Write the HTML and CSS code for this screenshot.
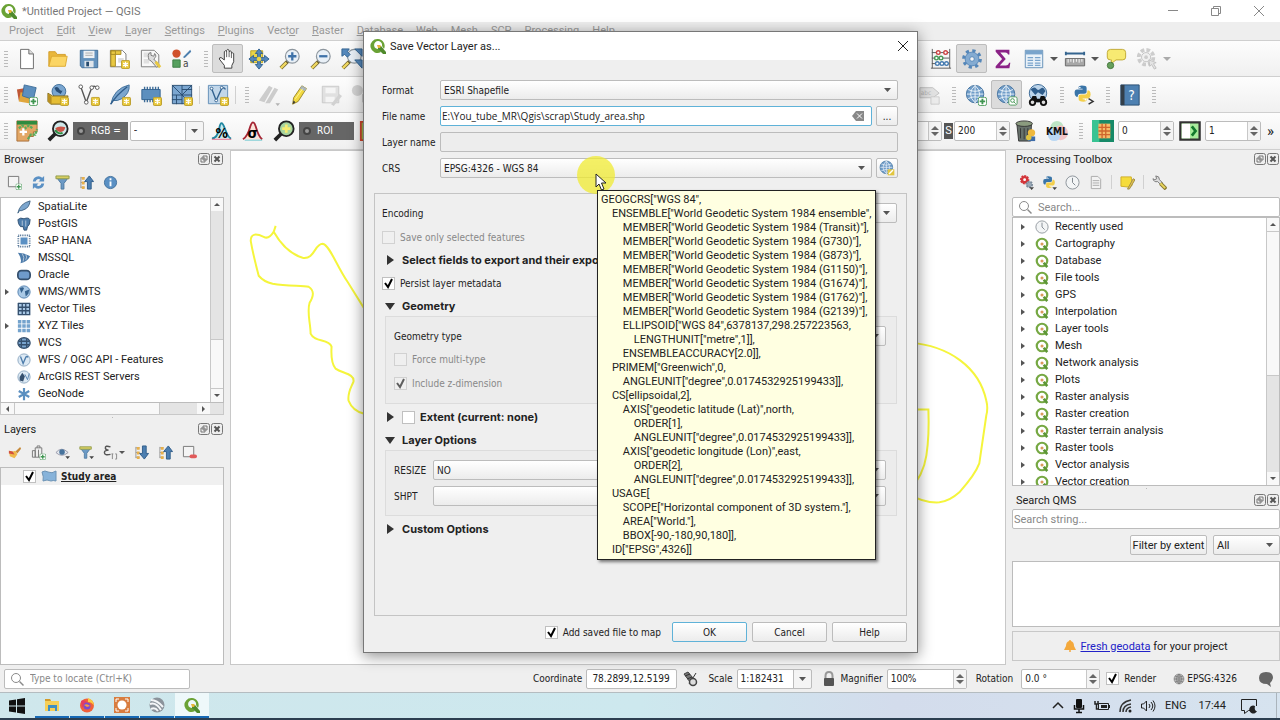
FILE: index.html
```html
<!DOCTYPE html>
<html lang="en">
<head>
    <meta charset="UTF-8">
    <meta name="viewport" content="width=device-width, initial-scale=1.0">
    <title>*Untitled Project — QGIS</title>
    <link rel="stylesheet" href="styles.css">
</head>
<body>
    <!-- shared icons -->
    <svg class="defs" width="0" height="0">
        <symbol id="qgis" viewBox="0 0 16 16">
            <path d="M8 1a7 7 0 1 0 3 13l-2-3a4 4 0 1 1 3-3l2 3A7 7 0 0 0 8 1z" fill="#6aa235"/>
            <path d="M8 8h3l5 6v2h-3L8 11z" fill="#4f8a2c"/>
            <path d="M7 7h3l1 1-1 2H8z" fill="#e8b53a"/>
        </symbol>
        <symbol id="qgis-small" viewBox="0 0 16 16">
            <circle cx="8" cy="8" r="6" fill="#fff" stroke="#76a843" stroke-width="2.5"/>
            <path d="M10 10l4 5" stroke="#5c9636" stroke-width="3"/>
            <circle cx="8" cy="8" r="1.8" fill="#d99a5b"/>
        </symbol>
        <symbol id="star" viewBox="0 0 10 10">
            <rect x=".5" y=".5" width="9" height="9" rx="1.5" fill="#e9c93c" stroke="#b99a28"/>
            <path d="M5 2v6M2.4 3.5l5.2 3M2.4 6.5l5.2-3" stroke="#fff" stroke-width="1.3"/>
        </symbol>
        <symbol id="plus" viewBox="0 0 10 10">
            <rect x=".5" y=".5" width="9" height="9" rx="2" fill="#fff" stroke="#4d9a5b"/>
            <path d="M5 2v6M2 5h6" stroke="#3f9550" stroke-width="2"/>
        </symbol>
        <symbol id="lens" viewBox="0 0 24 24">
            <path d="M10 14l-8 8" stroke="#6f6230" stroke-width="4"/>
            <path d="M8 16l-6 6" stroke="#f0d860" stroke-width="2.500"/>
            <circle cx="14.500" cy="9" r="7.500" fill="#e9f0f7" stroke="#8d969e" stroke-width="1.300"/>
        </symbol>
        <symbol id="globe" viewBox="0 0 24 24">
            <circle cx="11" cy="11" r="9.500" fill="#6f9cc8" stroke="#3e6f9c"/>
            <path d="M11 1.500v19M2 11h18M3.500 6q7.500 4 15 0M3.500 16q7.500-4 15 0M11 1.500q-10 9.500 0 19M11 1.500q10 9.500 0 19" fill="none" stroke="#eef5fb"/>
        </symbol>
        <symbol id="python" viewBox="0 0 24 24">
            <path d="M11 2q6 0 6 3v5q0 2-3 2H9q-3 0-3 4H4q-2-1-2-5t3-4h7V6H7V4q0-2 4-2z" fill="#3a75a8"/>
            <path d="M13 22q-6 0-6-3v-4q0-2 3-2h5q3 0 3-5h2q2 1 2 5t-3 5h-7v1h5v1q0 2-4 2z" fill="#f3cf4b"/>
            <circle cx="8.500" cy="4.500" r="1" fill="#fff"/><circle cx="15.500" cy="19.500" r="1" fill="#fff"/>
        </symbol>
        <symbol id="funnel" viewBox="0 0 16 16">
            <path d="M2 3h12L9.500 9v6h-3V9z" fill="#6c9ac6" stroke="#4b779f"/>
            <path d="M1 1h14v3H1z" fill="#d8cf62" stroke="#8f9a4c"/>
        </symbol>
        <symbol id="tree-up" viewBox="0 0 16 16">
            <path d="M2 2v12M2 3h4M2 8h4M2 13h4" stroke="#999" fill="none"/>
            <path d="M3 2h3v3H3zM3 7h3v3H3zM3 12h3v3H3z" fill="#e8b04a"/>
            <path d="M9 15V7H6l5-6 4.500 6H13v8z" fill="#4c7eb0" stroke="#2f5d8b"/>
        </symbol>
        <symbol id="tree-down" viewBox="0 0 16 16">
            <path d="M2 2v12M2 3h4M2 8h4M2 13h4" stroke="#999" fill="none"/>
            <path d="M3 2h3v3H3zM3 7h3v3H3zM3 12h3v3H3z" fill="#e8b04a"/>
            <path d="M9 1v8H6l5 6 4.500-6H13V1z" fill="#4c7eb0" stroke="#2f5d8b"/>
        </symbol>
        <symbol id="clock" viewBox="0 0 16 16">
            <circle cx="8" cy="8" r="7" fill="#f3f5f6" stroke="#8b9299"/>
            <path d="M8 3v5l3 3" fill="none" stroke="#7a828a"/>
        </symbol>
        <symbol id="search" viewBox="0 0 16 16">
            <circle cx="7" cy="7" r="4.500" fill="none" stroke="#8a8a8a"/>
            <path d="M10.500 10.500l4 4" stroke="#8a8a8a" stroke-width="1.500"/>
        </symbol>
        <symbol id="float" viewBox="0 0 12 12">
            <rect x=".5" y=".5" width="11" height="11" rx="2" fill="#eee" stroke="#777"/>
            <path d="M5 3h4v4H5zM3 5h4v4H3z" fill="none" stroke="#777"/>
        </symbol>
        <symbol id="close" viewBox="0 0 12 12">
            <rect x=".5" y=".5" width="11" height="11" rx="2" fill="#eee" stroke="#777"/>
            <path d="M3.500 3.500l5 5M8.500 3.500l-5 5" stroke="#555" stroke-width="2"/>
        </symbol>
    </svg>

    <header class="titlebar">
        <svg class="i16"><use href="#qgis"/></svg>
        <span class="title">*Untitled Project — QGIS</span>
        <button class="win" aria-label="Minimize"><svg class="i12" viewBox="0 0 12 12"><path d="M1 5.500h10" stroke="#888"/></svg></button>
        <button class="win" aria-label="Restore"><svg class="i12" viewBox="0 0 12 12"><path d="M1.500 3.500h7v7h-7zM3.500 3V1.500h7v7H9" fill="none" stroke="#888"/></svg></button>
        <button class="win" aria-label="Close"><svg class="i12" viewBox="0 0 12 12"><path d="M1 1l10 10M11 1L1 11" stroke="#888"/></svg></button>
    </header>

    <nav class="menubar">
        <a href="#">Pro<u>j</u>ect</a><a href="#"><u>E</u>dit</a><a href="#"><u>V</u>iew</a><a href="#"><u>L</u>ayer</a><a href="#"><u>S</u>ettings</a><a href="#"><u>P</u>lugins</a><a href="#">Vect<u>o</u>r</a><a href="#"><u>R</u>aster</a><a href="#"><u>D</u>atabase</a><a href="#"><u>W</u>eb</a><a href="#"><u>M</u>esh</a><a href="#"><u>S</u>CP</a><a href="#">Pro<u>c</u>essing</a><a href="#"><u>H</u>elp</a>
    </nav>

    <div class="toolbar">
        <i class="grip"></i>
        <button class="tool" aria-label="New project"><svg viewBox="0 0 24 24"><path d="M5 1.500h9l5 5v16H5z" fill="#fff" stroke="#666"/><path d="M14 1.500v5h5" fill="#ddd" stroke="#666"/></svg></button>
        <button class="tool" aria-label="Open project"><svg viewBox="0 0 24 24"><path d="M2 20V4h7l2 3h9v4" fill="#e9b73c" stroke="#d29d28"/><path d="M2 20L5 9h17l-2 11z" fill="#fbd564" stroke="#dca930"/></svg></button>
        <button class="tool" aria-label="Save project"><svg viewBox="0 0 24 24"><path d="M2.500 2.500h19v19h-17l-2-2z" fill="#6492bd" stroke="#3d6a95"/><path d="M6 3h12v8H6z" fill="#eef1f4"/><path d="M8 5.500h8M8 8h8" stroke="#aaa"/><path d="M7 14h10v7H7z" fill="#dfe5eb"/><path d="M9 15h3v5H9z" fill="#274c70"/></svg></button>
        <button class="tool" aria-label="New print layout"><svg viewBox="0 0 24 24"><path d="M1.500 2.500h13l4 4v14h-17z" fill="#fff" stroke="#777"/><path d="M2 3h5v17H2zM2 3h11v4H2z" fill="#e8c842" stroke="#a88b22"/><path d="M10 11h6v5h-6z" fill="#ddd"/><use href="#star" x="13" y="13" width="10" height="10"/></svg></button>
        <button class="tool" aria-label="Show layout manager"><svg viewBox="0 0 24 24"><path d="M1.500 2.500h14l5 5v13h-19z" fill="#f8f8f8" stroke="#777"/><path d="M4 5h8v5H4zM4 12h6v5H4z" fill="#e0e0e0"/><path d="M9 8q0-3 3-3v3l3 1 1-3q3 3-1 6l6 7-3 2-6-7q-3 0-3-6z" fill="#ddd" stroke="#777"/><path d="M17 15l5 6" stroke="#e8c842" stroke-width="3"/></svg></button>
        <button class="tool" aria-label="Style manager"><svg viewBox="0 0 24 24"><circle cx="6" cy="6" r="4.500" fill="#d0522c"/><path d="M13 10l8-8 1 2-7 7z" fill="#4d7fae"/><path d="M2 13h8v8H2z" fill="#56a05f" stroke="#3a7d44"/><text x="13" y="21" font-size="11" fill="#444">a</text></svg></button>
        <i class="grip wide"></i>
        <button class="tool on" aria-label="Pan map"><svg viewBox="0 0 24 24"><path d="M8 22v-3L2.500 12q0-2 2-1.500L8 13V4q1.200-2 2.500 0V2.500q1.200-2 2.700 0V4q1.300-1.500 2.500 0v2q1.300-1.500 2.500 0v9l-2 4v3z" fill="#fff" stroke="#333"/><path d="M10.500 4v6M13.200 4v6M15.700 6v5" stroke="#555"/></svg></button>
        <button class="tool" aria-label="Pan to selection"><svg viewBox="0 0 24 24"><path d="M3 3h13v13H3z" fill="#ecd546" stroke="#b7a022"/><path d="M12 1l4 5h-2.500v4.500H18V8l5 4-5 4v-2.500h-4.500V18H16l-4 5-4-5h2.500v-4.500H6V16l-5-4 5-4v2.500h4.500V6H8z" fill="#5588bb" stroke="#31618f"/><circle cx="12" cy="12" r="2.500" fill="#ecd546"/></svg></button>
        <button class="tool" aria-label="Zoom in"><svg viewBox="0 0 24 24"><use href="#lens" width="24" height="24"/><path d="M14.500 4.500v9M10 9h9" stroke="#3f72a8" stroke-width="2.500"/></svg></button>
        <button class="tool" aria-label="Zoom out"><svg viewBox="0 0 24 24"><use href="#lens" width="24" height="24"/><path d="M10 9h9" stroke="#3f72a8" stroke-width="2.500"/></svg></button>
        <button class="tool" aria-label="Zoom full"><svg viewBox="0 0 24 24"><use href="#lens" width="24" height="24"/><path d="M1 1h8L7 4l3 3-3 3-3-3-3 2zM15 1h8v8zM15 13h8v9z" fill="#5588bb" stroke="#31618f"/></svg></button>
        <div class="tools-right attributes">
            <button class="tool" aria-label="Statistical counter"><svg viewBox="0 0 24 24"><path d="M2.500 1v21M21.500 1v21M1 22h22M2 5h19M2 11h19M2 17h19" stroke="#555" fill="none"/><g fill="#fff" stroke-width="1.500"><g stroke="#cc4545"><circle cx="9" cy="5" r="2"/><circle cx="17" cy="5" r="2"/></g><g stroke="#4a9a59"><circle cx="7" cy="11" r="2"/><circle cx="12" cy="11" r="2"/></g><g stroke="#467bb0"><circle cx="8" cy="17" r="2"/><circle cx="13" cy="17" r="2"/><circle cx="18" cy="17" r="2"/></g></g></svg></button>
            <button class="tool on" aria-label="Processing toolbox"><svg viewBox="0 0 24 24"><circle cx="12" cy="12" r="9" fill="none" stroke="#5587b9" stroke-width="3.500" stroke-dasharray="3.500 3.570"/><circle cx="12" cy="12" r="7.500" fill="#84abd1" stroke="#5587b9"/><circle cx="12" cy="12" r="2.500" fill="#f4f4f4" stroke="#5587b9"/></svg></button>
            <button class="tool" aria-label="Statistical summary"><svg viewBox="0 0 24 24"><path d="M4 2h15v5h-1.500q-.5-2-3-2H9l6 7-6.500 7H15q3 0 3.500-3H20l-1 6H4v-2l7-8-7-8z" fill="#8b2287"/></svg></button>
            <button class="tool" aria-label="Open attribute table"><svg viewBox="0 0 24 24"><path d="M2.500 2.500h19v19h-19z" fill="#e9f1f8" stroke="#5e8bb5"/><path d="M3 3h18v4H3z" fill="#79a4cc"/><path d="M5 10.500h6M5 13.500h6M5 16.500h6M13 10.500h6M13 13.500h6M13 16.500h6M5 19h6M13 19h6" stroke="#79a4cc" stroke-width="1.500"/></svg></button>
            <i class="arrow"></i>
            <button class="tool" aria-label="Measure line"><svg viewBox="0 0 24 24"><path d="M2 6h20M2 4v4M22 4v4" stroke="#35658f" stroke-width="2"/><path d="M1.500 11.500h21v8h-21z" fill="#a7a7a7" stroke="#666"/><path d="M4.500 12v4M7.500 12v3M10.500 12v4M13.500 12v3M16.500 12v4M19.500 12v3" stroke="#fff"/></svg></button>
            <i class="arrow"></i>
            <button class="tool" aria-label="Map tips"><svg viewBox="0 0 24 24"><path d="M6 1.500h13q3.500 0 3.500 3.500v5q0 3-3.500 3h-7l-5 4v-4H6q-3.500 0-3.500-3V5Q2.500 1.500 6 1.500z" fill="#f7ea72" stroke="#bda52e"/><circle cx="6" cy="19" r="3.500" fill="#66a05c" stroke="#44763c"/></svg></button>
            <button class="tool off" aria-label="Run feature action"><svg viewBox="0 0 24 24"><circle cx="11" cy="10" r="8" fill="none" stroke="#bbb" stroke-width="4" stroke-dasharray="4 2.300"/><circle cx="11" cy="10" r="5" fill="#eee" stroke="#aaa"/><circle cx="11" cy="10" r="2" fill="#bbb"/><path d="M14 13l8 3-3 1 3 5-2 1-3-5-2 2z" fill="#ddd" stroke="#aaa"/></svg></button>
            <i class="arrow pale"></i>
        </div>
    </div>

    <div class="toolbar">
        <i class="grip"></i>
        <button class="tool" aria-label="Data source manager"><svg viewBox="0 0 24 24"><path d="M1 6l11-2 2 12-11 2z" fill="#bf5634"/><path d="M5 9l12 2-3 10-11-2z" fill="#e0a63c"/><path d="M9 1l13 3-3 13L7 13z" fill="#5c8fbe" stroke="#3c6c98"/><use href="#plus" x="14" y="14" width="10" height="10"/></svg></button>
        <button class="tool" aria-label="New GeoPackage layer"><svg viewBox="0 0 24 24"><circle cx="13" cy="8" r="7.500" fill="#7aa6d0" stroke="#3c6c98"/><path d="M8 4q4-2 5 1t4 2l-2 4-5-3zM16 2l3 3" fill="#294f78"/><path d="M1 10l5 3h17l-3 9H4L1 19z" fill="#e5bd34" stroke="#7d681e"/><path d="M1 10l4 4v8l-4-3z" fill="#b88f20"/><use href="#star" x="14" y="14" width="10" height="10"/></svg></button>
        <button class="tool" aria-label="New shapefile layer"><svg viewBox="0 0 24 24"><path d="M3 3l6 17L15 4q2-3 6 0" fill="none" stroke="#555" stroke-width="1.500"/><g fill="#fff" stroke="#555"><circle cx="3" cy="3" r="2"/><circle cx="9" cy="20" r="2"/><circle cx="15" cy="4" r="2"/><circle cx="21" cy="4" r="2"/></g><use href="#star" x="14" y="14" width="10" height="10"/></svg></button>
        <button class="tool" aria-label="New SpatiaLite layer"><svg viewBox="0 0 24 24"><path d="M2 22Q5 5 22 1q1 9-8 15-5 3-10 2z" fill="#7ca6ce" stroke="#3c6c98"/><path d="M2 22Q8 12 20 3" fill="none" stroke="#2f5d8b" stroke-width="1.500"/><use href="#star" x="14" y="14" width="10" height="10"/></svg></button>
        <button class="tool" aria-label="New temporary scratch layer"><svg viewBox="0 0 24 24"><path d="M5 3v17M8 3v17M11 3v17M14 3v17M17 3v17M20 3v17" stroke="#3c6c98" stroke-width="1.500"/><path d="M2 6h20v11H2z" fill="#5c8fbe" stroke="#31618f"/><use href="#star" x="14" y="14" width="10" height="10"/></svg></button>
        <button class="tool" aria-label="New mesh layer"><svg viewBox="0 0 24 24"><path d="M1.500 1.500h21v20h-21z" fill="#7ba6d0" stroke="#274c70"/><path d="M1 12h22M12 1v21M1 1l11 11L23 1M12 6h11M1 17h11M6 12v10M12 12l10 10" fill="none" stroke="#274c70"/><use href="#star" x="14" y="14" width="10" height="10"/></svg></button>
        <i class="sep"></i>
        <button class="tool" aria-label="New virtual layer"><svg viewBox="0 0 24 24"><path d="M1.500 1.500h21v20h-21z" fill="#c2d7ea" stroke="#5e8bb5"/><path d="M5 5l5 13 6-13q3-2 4 1" fill="none" stroke="#31618f" stroke-width="1.500"/><g fill="#fff" stroke="#31618f"><circle cx="5" cy="5" r="1.500"/><circle cx="10" cy="18" r="1.500"/><circle cx="16" cy="4" r="1.500"/></g><use href="#star" x="14" y="14" width="10" height="10"/></svg></button>
        <i class="sep"></i>
        <i class="grip wide"></i>
        <button class="tool off" aria-label="Current edits"><svg viewBox="0 0 24 24"><path d="M1 18L12 2l4 2-9 16zM8 21L18 4l4 2-9 15z" fill="#bbb"/><path d="M19 21h5l-2.500 3z" fill="#999"/></svg></button>
        <button class="tool" aria-label="Toggle editing"><svg viewBox="0 0 24 24"><path d="M4 22l1-7L14 2l5 3-9 14z" fill="#f2d940" stroke="#97852a"/><path d="M14 2l5 3-2 3-5-3z" fill="#a8b4be"/><path d="M4 22l3-2-2-2z" fill="#333"/><path d="M7 16l8-11" stroke="#fff5a0"/></svg></button>
        <button class="tool off" aria-label="Save layer edits"><svg viewBox="0 0 24 24"><path d="M2.500 2.500h18v18h-18z" fill="#d8d8d8" stroke="#b5b5b5"/><path d="M6 4h11v6H6zM6 14h10v6H6z" fill="#f4f4f4"/><path d="M12 22l9-11 3 2-9 11z" fill="#c4c4c4"/></svg></button>
        <button class="tool off" aria-label="Add feature"><svg viewBox="0 0 24 24"><circle cx="7" cy="7" r="6" fill="#c5c5c5"/><path d="M12 11h9v9h-9z" fill="#bbb"/></svg></button>
        <div class="tools-right">
            <button class="tool off" aria-label="Change label"><svg viewBox="0 0 24 24"><path d="M1 4h14l7 6-7 5H1z" fill="#d9d9d9" stroke="#aaa"/><text x="2" y="12" font-size="7" fill="#999">abc</text><path d="M13 14h9v8h-9z" fill="#e8e8e8" stroke="#bbb"/></svg></button>
            <i class="grip wide"></i>
            <button class="tool" aria-label="Add web map service"><svg viewBox="0 0 24 24"><use href="#globe" width="24" height="24"/><use href="#plus" x="14" y="14" width="10" height="10"/></svg></button>
            <button class="tool on" aria-label="Search web map services"><svg viewBox="0 0 24 24"><use href="#globe" width="24" height="24"/><rect x="14" y="14" width="9" height="9" rx="2" fill="#fff" stroke="#4d9a5b"/><circle cx="18" cy="18" r="2" fill="none" stroke="#3f9550"/><path d="M19.500 19.500l2 2" stroke="#3f9550"/></svg></button>
            <button class="tool" aria-label="Find metadata"><svg viewBox="0 0 24 24"><circle cx="12" cy="10" r="9.500" fill="#bcd4ea" stroke="#31618f"/><path d="M4 6q4-4 6-1t5 0 5 3l-3 4-5-3-3 3zM15 2l4 3" fill="#2f5d8b"/><path d="M3 20l3-7h4l1 3h3l1-3h4l3 7z" fill="#111"/><circle cx="6" cy="20" r="3" fill="#ddd" stroke="#111" stroke-width="2"/><circle cx="18" cy="20" r="3" fill="#ddd" stroke="#111" stroke-width="2"/></svg></button>
            <i class="grip wide"></i>
            <button class="tool" aria-label="Python console"><svg viewBox="0 0 24 24"><use href="#python" width="21" height="21"/><path d="M17 16l5 3-5 3" fill="none" stroke="#333" stroke-width="1.500"/></svg></button>
            <i class="grip wide"></i>
            <button class="tool" aria-label="Help contents"><svg viewBox="0 0 24 24"><path d="M2 1h20v22H2z" fill="#4d80b1" stroke="#274c70"/><path d="M2 1h4v22H2z" fill="#333f4a"/><text x="10" y="17" font-size="15" fill="#fff">?</text></svg></button>
            <i class="grip wide"></i>
        </div>
    </div>

    <div class="toolbar">
        <i class="grip"></i>
        <button class="tool" aria-label="SCP dock"><svg viewBox="0 0 24 24"><path d="M1 1h22v12h-4v5h-5v5H1z" fill="#e3a765" stroke="#a66c36"/><path d="M1 1h22v4H1z" fill="#2f8b3f"/><path d="M3 9l4-3 3 3 4-3 4 3M13 21l3-5h5l2-6" fill="none" stroke="#5cab5a" stroke-width="2.500" stroke-dasharray="3 1"/><path d="M8 9v8M4 13h8" stroke="#fff" stroke-width="2.500"/></svg></button>
        <button class="tool" aria-label="Zoom to image"><svg viewBox="0 0 24 24"><path d="M9 15l-7 7" stroke="#222" stroke-width="4"/><circle cx="14.500" cy="9.500" r="8" fill="#cfe9ea" stroke="#222" stroke-width="2"/><path d="M9 9q4-3 11-1-1 5-5 5t-6-4z" fill="#cc5648"/><path d="M9 11q3 5 8 3" fill="none" stroke="#2f8b3f" stroke-width="2"/></svg></button>
        <label class="scp-label" for="rgb"><i class="knob"></i>RGB =</label>
        <select class="combo-edit rgb" id="rgb"><option>-</option></select>
        <button class="tool" aria-label="Local cumulative cut stretch"><svg viewBox="0 0 24 24"><path d="M1 20Q7 20 9 9t6 0 7 11" fill="#c5eaf0" stroke="#2187a0" stroke-width="2"/><path d="M1 21h21" stroke="#e06080"/><text x="5" y="20" font-size="15" font-weight="bold" fill="#000">%</text></svg></button>
        <button class="tool" aria-label="Local standard deviation stretch"><svg viewBox="0 0 24 24"><path d="M1 21Q6 18 9 7q3-9 6 0 3 11 7 14" fill="#fbe3da" stroke="#a52534" stroke-width="2"/><path d="M3 22h19" stroke="#68c6cf"/><text x="6" y="20" font-size="16" font-weight="bold" fill="#000">σ</text></svg></button>
        <button class="tool" aria-label="Zoom to ROI"><svg viewBox="0 0 24 24"><path d="M9 15l-7 7" stroke="#222" stroke-width="4"/><circle cx="14.500" cy="9.500" r="8" fill="#a8d5a0" stroke="#222" stroke-width="2"/><path d="M14.500 5v9M10 9.500h9" stroke="#f7ec72" stroke-width="3"/></svg></button>
        <button class="scp-label roi"><i class="knob"></i>ROI</button>
        <button class="tool" aria-label="Create ROI polygon"><svg viewBox="0 0 24 24"><path d="M2 2h20v20H2z" fill="#9cb84b" stroke="#d0452c" stroke-width="2"/></svg></button>
        <div class="tools-right">
            <span class="spin lead"><input type="text" aria-label="Distance"><i class="updown"></i></span>
            <label class="s-label" for="s-value">S</label>
            <span class="spin s-spin"><input type="text" id="s-value" value="200"><i class="updown"></i></span>
            <button class="tool" aria-label="Clear temporary ROI"><svg viewBox="0 0 24 24"><path d="M2 4h16l-1 19H4z" fill="#66706a" stroke="#333"/><ellipse cx="10" cy="4" rx="9" ry="3" fill="#8b9b7f" stroke="#333"/><path d="M6 9v11M10 9v12M14 9v11" stroke="#333"/><circle cx="18" cy="14" r="4" fill="#efb83c"/><path d="M14 18h8v5h-8z" fill="#3e6ca8"/><circle cx="15" cy="19" r="3" fill="#e0c341"/></svg></button>
            <button class="tool" aria-label="Export KML"><svg viewBox="0 0 24 24"><circle cx="12" cy="8" r="7" fill="#bde5c5"/><circle cx="16" cy="14" r="8" fill="#f3c3c6"/><circle cx="9" cy="16" r="7" fill="#b9d7f3"/><text x="0" y="16" font-size="11" font-weight="bold" fill="#111">KML</text></svg></button>
            <i class="grip wide"></i>
            <button class="tool" aria-label="Raster grid"><svg viewBox="0 0 24 24"><path d="M0 0h24v24H0z" fill="#178a68"/><path d="M0 0h8v24H0z" fill="#39c393"/><path d="M7 4h13v16H7z" fill="#f3ba68"/><path d="M7 8h13M7 12h13M7 16h13M11 4v16M15 4v16" stroke="#cf662d" stroke-width="1.500"/></svg></button>
            <span class="spin"><input type="text" aria-label="Band" value="0"><i class="updown"></i></span>
            <button class="tool" aria-label="Next"><svg viewBox="0 0 24 24"><path d="M1.500 2.500h21v19h-21z" fill="#a9ec9c" stroke="#333" stroke-width="2.500"/><path d="M3 4h9v16H3z" fill="#fff"/><path d="M14 7l4 5-4 5" fill="none" stroke="#137a2c" stroke-width="3"/></svg></button>
            <span class="spin"><input type="text" aria-label="Class" value="1"><i class="updown"></i></span>
            <button class="more" aria-label="More tools">»</button>
        </div>
    </div>

    <main class="workspace">
        <aside class="dock left">
            <section class="browser">
                <div class="dock-head"><h2>Browser</h2><button aria-label="Float"><svg class="i12"><use href="#float"/></svg></button><button aria-label="Close"><svg class="i12"><use href="#close"/></svg></button></div>
                <div class="dock-tools">
                    <button aria-label="Add layer"><svg viewBox="0 0 16 16"><path d="M1.500 1.500h11v11h-11z" fill="#f4f4f4" stroke="#777"/><use href="#plus" x="9" y="9" width="7" height="7"/></svg></button>
                    <button aria-label="Refresh"><svg viewBox="0 0 16 16"><path d="M2 7a6 6 0 0 1 10-4l2-2v6H8l2-2a3 3 0 0 0-5 2zM14 9a6 6 0 0 1-10 4l-2 2V9h6l-2 2a3 3 0 0 0 5-2z" fill="#5a90c4"/></svg></button>
                    <button aria-label="Filter browser"><svg><use href="#funnel"/></svg></button>
                    <button aria-label="Collapse all"><svg><use href="#tree-up"/></svg></button>
                    <button aria-label="Properties"><svg viewBox="0 0 16 16"><circle cx="8" cy="8" r="6.500" fill="#5a90c4" stroke="#41709c"/><path d="M8 7v5M8 3.500v2" stroke="#fff" stroke-width="2"/></svg></button>
                </div>
                <div class="tree-box">
                    <ul class="tree">
                        <li><svg viewBox="0 0 16 16"><path d="M1 15Q3 4 15 1q-1 8-7 10-4 2-5 1z" fill="#7ca6ce" stroke="#3c5f80"/></svg>SpatiaLite</li>
                        <li><svg viewBox="0 0 16 16"><path d="M1 3q3-3 7-1 5-2 7 1 0 6-3 8l-1 4H8l-1-4H4Q1 8 1 3z" fill="#4d7cab" stroke="#2f4f70"/><path d="M6 4v6M10 4v7" stroke="#bcd"/></svg>PostGIS</li>
                        <li><svg viewBox="0 0 16 16"><path d="M1.500 1.500h13v13h-13z" fill="none" stroke="#4d6f92" stroke-width="2" stroke-dasharray="1 1"/><path d="M4 4h8v8H4z" fill="#5a90c4"/></svg>SAP HANA</li>
                        <li><svg viewBox="0 0 16 16"><path d="M1 2q7 0 14 4-3 6-11 8 2-5-3-12z" fill="#4d7cab"/><path d="M6 3q3 4 1 9M10 4q2 3 0 6" fill="none" stroke="#bcd"/></svg>MSSQL</li>
                        <li><svg viewBox="0 0 16 16"><rect x="1" y="3" width="14" height="10" rx="4" fill="#6f9bcb" stroke="#35506e" stroke-width="2"/></svg>Oracle</li>
                        <li class="parent"><svg viewBox="0 0 16 16"><circle cx="8" cy="8" r="7" fill="#a9c9e6" stroke="#4d7cab"/><path d="M3 4q4-3 5 0l-3 5zM9 7l5-2-1 5-3 3z" fill="#36638f"/></svg>WMS/WMTS</li>
                        <li><svg viewBox="0 0 16 16"><path d="M1 1h14v14H1z" fill="#a9c9e6"/><path d="M1.500 1v14M6 1v14M10 1v14M14.500 1v14M1 1.500h14M1 6h14M1 10h14M1 14.500h14" stroke="#35506e" stroke-width="1.500"/></svg>Vector Tiles</li>
                        <li class="parent"><svg viewBox="0 0 16 16"><path d="M1 1h4v4H1zM6 1h4v4H6zM11 1h4v4h-4zM1 6h4v4H1zM6 6h4v4H6zM11 6h4v4h-4zM1 11h4v4H1zM6 11h4v4H6zM11 11h4v4h-4z" fill="#74a3cd"/></svg>XYZ Tiles</li>
                        <li><svg viewBox="0 0 16 16"><ellipse cx="8" cy="8" rx="7" ry="6" fill="#7aa6d0" stroke="#35506e" stroke-width="1.500"/><path d="M2 6h12M2 10h12M5 3v10M11 3v10" stroke="#35506e" stroke-width="1.500"/></svg>WCS</li>
                        <li><svg viewBox="0 0 16 16"><circle cx="8" cy="8" r="7" fill="#dce9f4" stroke="#8aa6bf"/><path d="M4 4l3 8 3-7q1-2 3 0" fill="none" stroke="#4d7cab" stroke-width="1.500"/></svg>WFS / OGC API - Features</li>
                        <li><svg viewBox="0 0 16 16"><circle cx="8" cy="8" r="7" fill="#dce9f4" stroke="#8aa6bf"/><path d="M3 8l3-5 3 4-2 6-4-1z" fill="#35506e"/><path d="M9 5l3 6 2-7" fill="none" stroke="#4d7cab"/></svg>ArcGIS REST Servers</li>
                        <li><svg viewBox="0 0 16 16"><path d="M8 1v14M2 4.500l12 7M2 11.500l12-7" stroke="#5a8fc0" stroke-width="2.500"/></svg>GeoNode</li>
                    </ul>
                    <div class="vbar browser-bar"><i class="up"></i><b></b><i class="down"></i></div>
                </div>
                <div class="hbar"><i class="back"></i><b></b><i class="next"></i></div>
            </section>
            <div class="splitter"></div>
            <section class="layers">
                <div class="dock-head"><h2>Layers</h2><button aria-label="Float"><svg class="i12"><use href="#float"/></svg></button><button aria-label="Close"><svg class="i12"><use href="#close"/></svg></button></div>
                <div class="dock-tools">
                    <button aria-label="Layer styling"><svg viewBox="0 0 16 16"><path d="M9 7l5-5 1 2-4 5z" fill="#c78a3a"/><path d="M2 6l4 1 3-1 2 4-3 4-5-2z" fill="#efb94b"/><path d="M2 6l4 1 2 3-6-1z" fill="#d3503d"/></svg></button>
                    <button aria-label="Add group"><svg viewBox="0 0 16 16"><path d="M1.500 13V6h3v7zM4.500 13V3h7v10zM6.500 3V1h3v2" fill="#eee" stroke="#777"/><path d="M8 5v8" stroke="#777"/><use href="#plus" x="9" y="9" width="7" height="7"/></svg></button>
                    <button aria-label="Map themes"><svg viewBox="0 0 16 16"><path d="M1 8q6-7 13 0-7 6-13 0z" fill="#e4e9ee" stroke="#99a"/><circle cx="7.500" cy="7.500" r="3" fill="#47739c"/><path d="M11 12h5l-2.500 3z" fill="#444"/></svg></button>
                    <button aria-label="Filter legend"><svg viewBox="0 0 16 16"><use href="#funnel" width="14" height="16"/><path d="M11 12h5l-2.500 3z" fill="#444"/></svg></button>
                    <button class="expr" aria-label="Filter by expression"><svg viewBox="0 0 16 16"><path d="M8 2Q2 0 2.500 3.500 3 5.500 6 5.500 1.500 5.500 1.500 8q0 3.500 6.500 2" fill="none" stroke="#555" stroke-width="1.500"/><path d="M10 15V9.500M9 9.500h2M13 9.500h1.500V15H13" fill="none" stroke="#888"/></svg><i class="arrow"></i></button>
                    <button aria-label="Expand all"><svg><use href="#tree-down"/></svg></button>
                    <button aria-label="Collapse all"><svg><use href="#tree-up"/></svg></button>
                    <button aria-label="Remove layer"><svg viewBox="0 0 16 16"><path d="M1.500 1.500h11v11h-11z" fill="#f4f4f4" stroke="#777"/><rect x="8" y="10" width="8" height="4" rx="2" fill="#e15a5a"/></svg></button>
                </div>
                <div class="layer-list">
                    <label class="layer"><input type="checkbox" checked><svg class="i16" viewBox="0 0 16 16"><path d="M1 3q3-2 6 0 4 2 8-1v10q-3-1-5 0-4-2-8 0 1-4-1-9z" fill="#87b3da" stroke="#6c93b5"/></svg><span>Study area</span></label>
                </div>
            </section>
        </aside>

        <div class="map">
            <svg viewBox="230 150 776 514" preserveAspectRatio="xMidYMid slice">
                <path d="M275 225L273 231Q285 252 302 257C314 259 314 243 322 243C329 244 336 265 347 281L390 350M273 231Q268 239 263 236Q250 230 250 240Q252 252 258 275Q263 281 272 283C288 286 302 284 308 286Q316 291 309 302C306 312 310 322 310 333C314 342 328 338 331 346Q330 362 335 368C342 373 354 373 353 381C350 388 347 392 348 400Q352 410 363 413"/>
                <path d="M910 342C950 345 980 367 987 400Q989 408 987 415L980 463Q976 474 960 492Q950 501 940 502Q925 503 910 494M900 409H929Q930 435 927 455Q924 475 910 490"/>
            </svg>
        </div>

        <aside class="dock right">
            <section class="toolbox">
                <div class="dock-head"><h2>Processing Toolbox</h2><button aria-label="Float"><svg class="i12"><use href="#float"/></svg></button><button aria-label="Close"><svg class="i12"><use href="#close"/></svg></button></div>
                <div class="dock-tools">
                    <button aria-label="Models"><svg viewBox="0 0 16 16"><circle cx="6" cy="5" r="4" fill="#d3353a" stroke="#d3353a" stroke-width="2" stroke-dasharray="2 1"/><circle cx="6" cy="5" r="1.500" fill="#fff"/><circle cx="11" cy="10" r="3" fill="#9aa9b7" stroke="#7c8c9b" stroke-width="2" stroke-dasharray="2 1"/><path d="M11 13h5l-2.500 3z" fill="#444"/></svg></button>
                    <button aria-label="Scripts"><svg viewBox="0 0 16 16"><use href="#python" width="15" height="15"/><path d="M11 13h5l-2.500 3z" fill="#444"/></svg></button>
                    <button aria-label="History"><svg><use href="#clock"/></svg></button>
                    <button aria-label="Results viewer"><svg viewBox="0 0 16 16"><path d="M3.500 1.500h7l3 3v10h-10z" fill="#f2f2f2" stroke="#aaa"/><path d="M5 6h7M5 8.500h7M5 11h7" stroke="#aaa"/></svg></button>
                    <i class="sep"></i>
                    <button aria-label="Edit in-place"><svg viewBox="0 0 16 16"><path d="M1 2h11l1 9-3 2-9-1z" fill="#f5dc3b" stroke="#cfae28"/><path d="M8 15l6-11 2 1-6 10z" fill="#e5c34b" stroke="#9d8c4c"/></svg></button>
                    <i class="sep"></i>
                    <button aria-label="Options"><svg viewBox="0 0 16 16"><path d="M1 4q1 4 5 3l3 3 2-2-3-3Q8 1 4 1l1 3-2 1z" fill="#ddd" stroke="#777"/><path d="M9 9l6 6" stroke="#8a7a35" stroke-width="4"/><path d="M9 9l5 5" stroke="#ead75c" stroke-width="2"/></svg></button>
                </div>
                <label class="search"><svg class="i16"><use href="#search"/></svg><input type="text" placeholder="Search..." aria-label="Search"></label>
                <div class="tree-box">
                    <ul class="tree">
                        <li class="parent"><svg><use href="#clock"/></svg>Recently used</li>
                        <li class="parent"><svg><use href="#qgis-small"/></svg>Cartography</li>
                        <li class="parent"><svg><use href="#qgis-small"/></svg>Database</li>
                        <li class="parent"><svg><use href="#qgis-small"/></svg>File tools</li>
                        <li class="parent"><svg><use href="#qgis-small"/></svg>GPS</li>
                        <li class="parent"><svg><use href="#qgis-small"/></svg>Interpolation</li>
                        <li class="parent"><svg><use href="#qgis-small"/></svg>Layer tools</li>
                        <li class="parent"><svg><use href="#qgis-small"/></svg>Mesh</li>
                        <li class="parent"><svg><use href="#qgis-small"/></svg>Network analysis</li>
                        <li class="parent"><svg><use href="#qgis-small"/></svg>Plots</li>
                        <li class="parent"><svg><use href="#qgis-small"/></svg>Raster analysis</li>
                        <li class="parent"><svg><use href="#qgis-small"/></svg>Raster creation</li>
                        <li class="parent"><svg><use href="#qgis-small"/></svg>Raster terrain analysis</li>
                        <li class="parent"><svg><use href="#qgis-small"/></svg>Raster tools</li>
                        <li class="parent"><svg><use href="#qgis-small"/></svg>Vector analysis</li>
                        <li class="parent"><svg><use href="#qgis-small"/></svg>Vector creation</li>
                    </ul>
                    <div class="vbar toolbox-bar"><i class="up"></i><b></b><i class="down"></i></div>
                </div>
            </section>
            <div class="splitter"></div>
            <section class="qms">
                <div class="dock-head"><h2>Search QMS</h2><button aria-label="Float"><svg class="i12"><use href="#float"/></svg></button><button aria-label="Close"><svg class="i12"><use href="#close"/></svg></button></div>
                <input class="field" type="text" placeholder="Search string..." aria-label="Search string">
                <div class="qms-filter">
                    <button class="btn">Filter by extent</button>
                    <select aria-label="Service type"><option>All</option></select>
                </div>
                <div class="qms-results"></div>
                <p class="qms-note"><svg class="i12" viewBox="0 0 12 12"><path d="M6 0q1 0 1 1 3 1 3 5l2 4H0l2-4q0-4 3-5 0-1 1-1z" fill="#f4a93c"/><circle cx="6" cy="11" r="1" fill="#f4a93c"/></svg><span><a href="#">Fresh geodata</a> for your project</span></p>
            </section>
        </aside>
    </main>

    <footer class="statusbar">
        <label class="search locate"><svg class="i16"><use href="#search"/></svg><input type="text" placeholder="Type to locate (Ctrl+K)" aria-label="Locate"></label>
        <label for="coord">Coordinate</label>
        <input class="field coord" id="coord" type="text" value="78.2899,12.5199">
        <svg class="i16 extents" viewBox="0 0 16 16"><path d="M2 3l4-2 5 6-3 4z" fill="#777" stroke="#444"/><path d="M3 5l5-2M5 8l5-2M7 13q4-6 7-11" stroke="#333" fill="none"/><circle cx="11" cy="11" r="3.500" fill="#ddd" stroke="#444" stroke-width="1.500"/></svg>
        <label for="scale">Scale</label>
        <select class="combo-edit scale" id="scale"><option>1:182431</option></select>
        <svg class="i16 lock" viewBox="0 0 16 16"><path d="M4.500 8V5q0-4 3.500-4t3.500 4v3" fill="none" stroke="#999" stroke-width="2"/><rect x="3" y="7" width="10" height="8" rx="1" fill="#555"/></svg>
        <label for="magnifier">Magnifier</label>
        <span class="spin mag"><input id="magnifier" type="text" value="100%"><i class="updown"></i></span>
        <label for="rotation">Rotation</label>
        <span class="spin rot"><input id="rotation" type="text" value="0.0 °"><i class="updown"></i></span>
        <label class="check"><input type="checkbox" checked>Render</label>
        <button class="crs"><svg class="i12" viewBox="0 0 24 24"><circle cx="12" cy="12" r="10" fill="#bbb" stroke="#666"/><path d="M12 2v20M2 12h20M4 6q8 5 16 0M4 18q8-5 16 0M12 2q-10 10 0 20M12 2q10 10 0 20" fill="none" stroke="#777" stroke-width="1.500"/></svg>EPSG:4326</button>
        <button class="messages" aria-label="Messages"><svg class="i16" viewBox="0 0 16 16"><path d="M8 1q7 0 7 6-1 4-3 5l1 4-4-3Q1 13 1 7q0-6 7-6z" fill="#666"/></svg></button>
    </footer>

    <div class="taskbar">
        <button aria-label="Start"><svg class="i16" viewBox="0 0 16 16"><path d="M0 2.500L7 1.500v6H0zM8 1.300L16 0v7.500H8zM0 8.500h7v6L0 13.500zM8 8.500h8V16l-8-1.300z" fill="#111"/></svg></button>
        <button class="run" aria-label="File Explorer"><svg class="i16" viewBox="0 0 16 16"><path d="M1 2h5l1 2h8v10H1z" fill="#f6cf57"/><path d="M1 2h5l1 2H1z" fill="#d39a2b"/><path d="M4 14V8h9v6h-2v-3H6v3z" fill="#3e8fc4"/></svg></button>
        <button class="run" aria-label="Firefox"><svg class="i16" viewBox="0 0 16 16"><circle cx="8" cy="8.500" r="7" fill="#f0603a"/><path d="M9 1q6 2 6 8-2-4-6-4z" fill="#fbc940"/><path d="M2 4q3-2 6 1l-5 6z" fill="#e53c62"/><circle cx="8" cy="9" r="3.500" fill="#7b4bd0"/><path d="M5 8q3-2 6 1l-3 1z" fill="#f79a3c"/></svg></button>
        <button class="run" aria-label="Screen recorder"><svg class="i16" viewBox="0 0 16 16"><path d="M0 0h16v16H0z" fill="#d87c3f"/><path d="M2 5V2h3M11 2h3v3M14 11v3h-3M5 14H2v-3" fill="none" stroke="#fff"/><circle cx="8" cy="8" r="4.500" fill="#fff"/></svg></button>
        <button class="run" aria-label="Google Earth"><svg class="i16" viewBox="0 0 16 16"><circle cx="8" cy="8" r="7.500" fill="#8b939b"/><path d="M2 3q6 0 12 7M1 7q6-2 11 6M2 12q4-2 7 2" fill="none" stroke="#f4f6f8" stroke-width="2"/></svg></button>
        <button class="run active" aria-label="QGIS"><svg class="i16"><use href="#qgis"/></svg></button>
        <div class="tray">
            <svg class="i12" viewBox="0 0 12 12"><path d="M1 8l5-5 5 5" fill="none" stroke="#222" stroke-width="1.500"/></svg>
            <svg class="i16" viewBox="0 0 16 16"><rect x="5" y="1" width="6" height="9" rx="1" fill="#111"/><path d="M3.500 7v4h9V7M8 11v4M5 14.500h6" fill="none" stroke="#111" stroke-width="1.500"/></svg>
            <svg class="i16" viewBox="0 0 16 16"><path d="M4.500 5.500h10v6h-10z" fill="none" stroke="#222"/><path d="M7 7h6v3H7z" fill="#222"/><path d="M1 3v3h3V3M2.500 6v5H5" fill="none" stroke="#222" stroke-width="1.500"/><path d="M15 7v3" stroke="#222" stroke-width="2"/></svg>
            <svg class="i16" viewBox="0 0 16 16"><path d="M3 14Q3 4 14 2M6 14q0-7 8-8M9 14q0-4 5-5" fill="none" stroke="#333" stroke-width="1.500"/><circle cx="13" cy="13" r="1.500" fill="#222"/></svg>
            <svg class="i16" viewBox="0 0 16 16"><path d="M1.500 6v4h2l3 3V3l-3 3zM9 6q2 2 0 4M11 4q3.500 4 0 8M13 2.500q4 5.500 0 11" fill="none" stroke="#222"/></svg>
            <span class="lang">ENG</span>
            <time>17:44</time>
            <svg class="i16" viewBox="0 0 16 16"><path d="M15.500 8V1.500H.5v11h3v3l4-3h3" fill="none" stroke="#222"/><path d="M14 8a4 4 0 1 0 2 5q-3 0-2-5z" fill="#222"/></svg>
            <i class="peek"></i>
        </div>
    </div>

    <div class="dialog" role="dialog" aria-labelledby="dialog-title">
        <div class="dialog-head">
            <svg class="i16"><use href="#qgis"/></svg>
            <h1 id="dialog-title">Save Vector Layer as...</h1>
            <button aria-label="Close"><svg class="i12" viewBox="0 0 12 12"><path d="M1 1l10 10M11 1L1 11" stroke="#222"/></svg></button>
        </div>
        <form class="form">
            <div class="row">
                <label for="format">Format</label>
                <select id="format"><option>ESRI Shapefile</option></select>
            </div>
            <div class="row">
                <label for="filename">File name</label>
                <span class="file"><input id="filename" type="text" value="E:\You_tube_MR\Qgis\scrap\Study_area.shp"><svg class="clear" viewBox="0 0 12 10"><path d="M4 0h8v10H4L0 5z" fill="#888"/><path d="M5 2.500l5 5M10 2.500l-5 5" stroke="#fff"/></svg></span>
                <button type="button" class="btn browse">...</button>
            </div>
            <div class="row">
                <label for="layername">Layer name</label>
                <input class="field" id="layername" type="text" disabled>
            </div>
            <div class="row">
                <label for="crs">CRS</label>
                <select id="crs"><option>EPSG:4326 - WGS 84</option></select>
                <button type="button" class="btn pick" aria-label="Select CRS"><svg class="i16" viewBox="0 0 24 24"><use href="#globe" width="24" height="24"/><path d="M13 14h10v9H13z" fill="#e2c63e"/><path d="M15 21l6-6" stroke="#fff" stroke-width="2"/></svg></button>
            </div>

            <div class="options">
                <div class="opt-row">
                    <label for="encoding">Encoding</label>
                    <select class="encoding" id="encoding"><option></option></select>
                </div>
                <label class="check muted"><input type="checkbox" disabled>Save only selected features</label>
                <h3 class="closed">Select fields to export and their export options</h3>
                <label class="check"><input type="checkbox" checked>Persist layer metadata</label>
                <h3 class="open">Geometry</h3>
                <div class="group geometry">
                    <div class="opt-row">
                        <label for="geomtype">Geometry type</label>
                        <select class="geomtype" id="geomtype"><option></option></select>
                    </div>
                    <label class="check muted"><input type="checkbox" disabled>Force multi-type</label>
                    <label class="check muted"><input type="checkbox" checked disabled>Include z-dimension</label>
                </div>
                <h3 class="closed extent"><label class="check"><input type="checkbox">Extent (current: none)</label></h3>
                <h3 class="open">Layer Options</h3>
                <div class="group layer-options">
                    <div class="opt-row">
                        <label for="resize">RESIZE</label>
                        <select id="resize"><option>NO</option></select>
                    </div>
                    <div class="opt-row">
                        <label for="shpt">SHPT</label>
                        <select id="shpt"><option></option></select>
                    </div>
                </div>
                <h3 class="closed extent">Custom Options</h3>
            </div>

            <div class="actions">
                <label class="check"><input type="checkbox" checked>Add saved file to map</label>
                <button type="button" class="btn primary">OK</button>
                <button type="button" class="btn">Cancel</button>
                <button type="button" class="btn">Help</button>
            </div>
        </form>
    </div>

    <div class="halo"></div>
    <pre class="tooltip" role="tooltip">GEOGCRS["WGS 84",
    ENSEMBLE["World Geodetic System 1984 ensemble",
        MEMBER["World Geodetic System 1984 (Transit)"],
        MEMBER["World Geodetic System 1984 (G730)"],
        MEMBER["World Geodetic System 1984 (G873)"],
        MEMBER["World Geodetic System 1984 (G1150)"],
        MEMBER["World Geodetic System 1984 (G1674)"],
        MEMBER["World Geodetic System 1984 (G1762)"],
        MEMBER["World Geodetic System 1984 (G2139)"],
        ELLIPSOID["WGS 84",6378137,298.257223563,
            LENGTHUNIT["metre",1]],
        ENSEMBLEACCURACY[2.0]],
    PRIMEM["Greenwich",0,
        ANGLEUNIT["degree",0.0174532925199433]],
    CS[ellipsoidal,2],
        AXIS["geodetic latitude (Lat)",north,
            ORDER[1],
            ANGLEUNIT["degree",0.0174532925199433]],
        AXIS["geodetic longitude (Lon)",east,
            ORDER[2],
            ANGLEUNIT["degree",0.0174532925199433]],
    USAGE[
        SCOPE["Horizontal component of 3D system."],
        AREA["World."],
        BBOX[-90,-180,90,180]],
    ID["EPSG",4326]]</pre>
    <svg class="pointer" viewBox="0 0 12 18"><path d="M1 1v13l3-3 2.500 6 2.500-1-2.500-6H11z" fill="#fff" stroke="#222"/></svg>
</body>
</html>
```
FILE: styles.css
```css
* {
    box-sizing: border-box;
}
body {
    display: flex;
    flex-direction: column;
    height: 100vh;
    margin: 0;
    overflow: hidden;
    background: #efefef;
    color: #222;
    font-family: Roboto, sans-serif;
    font-size: 11px;
}
.defs {
    position: absolute;
}
button, input, select {
    font: inherit;
    color: inherit;
}
button {
    padding: 0;
    border: 0;
    background: none;
}
svg {
    display: block;
    flex: none;
}
svg text {
    font-family: "DejaVu Sans Condensed", sans-serif;
}
h1, h2, h3, p, ul, pre {
    margin: 0;
    padding: 0;
    font-size: 11px;
    font-weight: normal;
}
input {
    margin: 0;
    min-width: 0;
}
.i12 {
    width: 12px;
    height: 12px;
}
.i16 {
    width: 16px;
    height: 16px;
}

/* title and menu */
.titlebar {
    display: flex;
    align-items: center;
    height: 22px;
    padding-left: 1px;
    background: #fff;
    color: #777;
}
.titlebar .title {
    flex: 1;
    padding-left: 5px;
}
.win {
    display: flex;
    justify-content: center;
    width: 43px;
}
.menubar {
    display: flex;
    gap: 13px;
    height: 18px;
    padding: 2px 9px;
    line-height: 14px;
    background: #eee;
}
.menubar a {
    color: #999;
    text-decoration: none;
}

/* toolbars */
.toolbar {
    display: flex;
    align-items: center;
    height: 36px;
    border-top: 1px solid #cfcfcf;
    background: linear-gradient(#fdfdfd, #f0f0f0);
    flex: none;
}
.grip {
    width: 4px;
    height: 18px;
    margin: 0 3px 0 4px;
    background: radial-gradient(circle, #bbb 30%, transparent 40%) 0 0 / 2px 3px;
    flex: none;
}
.grip.wide {
    margin: 0 4px 0 7px;
}
.tool {
    display: flex;
    align-items: center;
    justify-content: center;
    width: 31px;
    height: 29px;
    flex: none;
}
.tool svg {
    width: 22px;
    height: 22px;
    overflow: visible;
}
.tool.on {
    border: 1px solid #bdbdbd;
    border-radius: 2px;
    background: #dcdcdc;
}
.tool.off {
    opacity: 0.7;
}
.sep {
    width: 1px;
    height: 18px;
    margin: 0 2px;
    background: #d0d0d0;
}
.arrow {
    width: 0;
    margin: 0 1px;
    border: 4px solid transparent;
    border-top-color: #555;
    border-bottom: 0;
}
.arrow.pale {
    border-top-color: #aaa;
}
.tools-right {
    display: flex;
    align-items: center;
    width: 366px;
    margin-left: auto;
}
.attributes {
    padding-left: 11px;
}
.scp-label {
    display: flex;
    align-items: center;
    gap: 6px;
    width: 55px;
    height: 18px;
    padding-left: 4px;
    background: #666;
    color: #fff;
    font-family: "DejaVu Sans Condensed", sans-serif;
    font-size: 10px;
}
.knob {
    width: 8px;
    height: 8px;
    border: 2px solid #444;
    border-radius: 50%;
    background: #999;
}
.combo-edit.rgb {
    width: 74px;
    margin: 0 2px;
}
.s-label {
    width: 9px;
    background: #555;
    color: #fff;
    line-height: 16px;
    text-align: center;
}

/* shared fields */
select, .field, .spin, .search, .file {
    height: 20px;
    border: 1px solid #bcbcbc;
    border-radius: 2px;
    background: #fff;
}
select {
    appearance: none;
    padding: 0 18px 0 3px;
    background: url("data:image/svg+xml,%3Csvg xmlns='http://www.w3.org/2000/svg' width='7' height='4'%3E%3Cpath d='M0 0h7L3.500 4z' fill='%23555'/%3E%3C/svg%3E") no-repeat right 6px center, linear-gradient(#fff, #ececec);
}
select.combo-edit {
    background: url("data:image/svg+xml,%3Csvg xmlns='http://www.w3.org/2000/svg' width='18' height='18'%3E%3Cpath d='M0 0h18v18H0z' fill='%23f4f4f4'/%3E%3Cpath d='M.5 0v18' stroke='%23bcbcbc'/%3E%3Cpath d='M6 7h7l-3.500 4z' fill='%23555'/%3E%3C/svg%3E") no-repeat right center, #fff;
}
.spin {
    display: flex;
    width: 56px;
    font-family: "DejaVu Sans Condensed", sans-serif;
    font-size: 10px;
}
.spin input {
    flex: 1;
    width: 0;
    padding: 0 3px;
    border: 0;
    background: none;
}
.updown {
    width: 13px;
    border-left: 1px solid #c8c8c8;
    background: url("data:image/svg+xml,%3Csvg xmlns='http://www.w3.org/2000/svg' width='8' height='12'%3E%3Cpath d='M0 5l4-4 4 4zM0 7h8l-4 4z' fill='%23666'/%3E%3C/svg%3E") no-repeat center, #f4f4f4;
}
.spin.lead {
    width: 28px;
    margin-right: 2px;
}
.s-spin {
    margin-left: 1px;
}
.more {
    flex: 1;
    font-size: 15px;
}
.search {
    display: flex;
    align-items: center;
    padding-left: 4px;
}
.search input {
    flex: 1;
    padding: 0 5px;
    border: 0;
    background: none;
}
::placeholder {
    color: #888;
    opacity: 1;
}
input[type="checkbox"] {
    appearance: none;
    width: 13px;
    height: 13px;
    border: 1px solid #c0c0c0;
    background: #fff;
    flex: none;
}
input[type="checkbox"]:checked {
    background: #fff url("data:image/svg+xml,%3Csvg xmlns='http://www.w3.org/2000/svg' width='11' height='11'%3E%3Cpath d='M2 5l3 4 4-8' fill='none' stroke='%23000' stroke-width='2'/%3E%3C/svg%3E") no-repeat center;
}
input[type="checkbox"]:disabled {
    background-color: #f2f2f2;
    opacity: 0.6;
}
.check {
    display: flex;
    align-items: center;
    gap: 5px;
}
.btn {
    height: 20px;
    border: 1px solid #bcbcbc;
    border-radius: 2px;
    background: linear-gradient(#fff, #ececec);
}

/* docks */
.workspace {
    display: flex;
    flex: 1;
    min-height: 0;
    margin-top: 1px;
    border-top: 1px solid #cfcfcf;
}
.dock {
    display: flex;
    flex-direction: column;
}
.dock.left {
    width: 224px;
    margin-right: 6px;
}
.dock.right {
    width: 268px;
    margin-left: 6px;
}
.dock-head {
    display: flex;
    align-items: center;
    gap: 1px;
    height: 18px;
    padding: 0 1px 0 4px;
}
.dock-head h2 {
    flex: 1;
}
.dock-tools {
    display: flex;
    align-items: center;
    gap: 9px;
    height: 29px;
    padding: 0 0 1px 7px;
}
.right .dock-tools {
    gap: 8px;
}
.dock-tools button {
    display: flex;
    align-items: center;
}
.dock-tools svg {
    width: 15px;
    height: 15px;
}
.dock-tools .sep {
    margin: 0;
    height: 14px;
}
.dock-tools .expr .arrow {
    margin: 0 0 0 1px;
    border-width: 3px;
    border-bottom: 0;
}
.tree-box {
    display: flex;
    border: 1px solid #bcbcbc;
    background: #fff;
}
.tree {
    flex: 1;
    list-style: none;
}
.tree li {
    display: flex;
    align-items: center;
    gap: 7px;
    height: 17px;
    padding-left: 17px;
    white-space: nowrap;
}
.tree li::before {
    content: "";
    margin-left: -13px;
    border: 3px solid transparent;
    border-left: 4px solid transparent;
    border-right: 0;
}
.tree li.parent::before {
    border-left-color: #555;
}
.tree svg {
    width: 14px;
    height: 14px;
    margin-left: 1px;
}
.toolbox .tree li {
    gap: 6px;
    padding-left: 21px;
}
.toolbox .tree svg {
    margin-left: 4px;
}
.vbar {
    display: flex;
    flex-direction: column;
    width: 13px;
    border-left: 1px solid #c8c8c8;
    background: #e4e4e4;
}
.vbar i, .vbar b, .hbar i, .hbar b {
    display: flex;
    align-items: center;
    justify-content: center;
    background: #f8f8f8;
}
.vbar i {
    height: 13px;
}
.vbar b {
    border: solid #c8c8c8;
    border-width: 1px 0;
}
.browser-bar b {
    height: 50px;
    margin-top: auto;
}
.toolbox-bar b {
    height: 145px;
    margin-bottom: auto;
}
.vbar i::before, .hbar i::before {
    content: "";
    border: 3px solid transparent;
}
.vbar .up::before {
    border-top: 0;
    border-bottom-color: #555;
}
.vbar .down::before {
    border-bottom: 0;
    border-top-color: #555;
}
.hbar {
    display: flex;
    height: 12px;
    padding-right: 13px;
    border: 1px solid #c8c8c8;
    border-top: 0;
    background: #e4e4e4;
}
.hbar i {
    width: 13px;
}
.hbar b {
    width: 146px;
    margin-right: auto;
    border: solid #c8c8c8;
    border-width: 0 1px;
}
.hbar .back::before {
    border-left: 0;
    border-right-color: #555;
}
.hbar .next::before {
    border-right: 0;
    border-left-color: #555;
}
.splitter {
    height: 5px;
    background: radial-gradient(circle, #bbb 30%, transparent 40%) center / 3px 3px no-repeat;
}
.layers {
    display: flex;
    flex-direction: column;
    flex: 1;
}
.layer-list {
    flex: 1;
    border: 1px solid #bcbcbc;
    background: #fff;
}
.layer {
    display: flex;
    align-items: center;
    height: 17px;
    padding-left: 22px;
    background: #f0f0f0;
    font: bold 10px "DejaVu Sans Condensed", sans-serif;
    text-decoration: underline;
}
.layer svg {
    margin: 0 4px 0 5px;
}
.map {
    flex: 1;
    min-width: 0;
    border: 1px solid #c8c8c8;
    background: #fff;
}
.map svg {
    width: 100%;
    height: 100%;
}
.map path {
    fill: none;
    stroke: #f5f53c;
    stroke-width: 2;
}
.toolbox .tree-box {
    height: 269px;
    overflow: hidden;
}
.qms {
    display: flex;
    flex-direction: column;
    flex: 1;
}
.qms .field {
    padding: 0 1px;
}
.qms-filter {
    display: flex;
    justify-content: flex-end;
    gap: 6px;
    padding: 6px 0;
}
.qms-filter .btn {
    width: 77px;
}
.qms-filter select {
    width: 67px;
}
.qms-results {
    flex: 1;
    border: 1px solid #bcbcbc;
    background: #fff;
}
.qms-note {
    display: flex;
    align-items: center;
    justify-content: center;
    gap: 4px;
    height: 30px;
    margin: 4px 0;
    border: 1px solid #c8c8c8;
}
.qms-note a {
    color: #2222c8;
}

/* status bar and taskbar */
.statusbar {
    display: flex;
    align-items: center;
    height: 27px;
    padding-left: 4px;
    font-family: "DejaVu Sans Condensed", sans-serif;
    font-size: 10px;
}
.locate {
    width: 186px;
    margin-right: auto;
}
.coord {
    width: 91px;
    margin-left: 4px;
    padding: 0 5px;
}
.extents {
    margin: 0 10px 0 5px;
}
.scale {
    width: 75px;
    margin: 0 9px 0 4px;
}
.lock {
    margin-right: 4px;
}
.spin.mag {
    width: 80px;
    margin: 0 9px 0 4px;
}
.spin.rot {
    width: 79px;
    margin: 0 6px 0 8px;
}
.crs {
    display: flex;
    align-items: center;
    gap: 2px;
    margin: 0 21px 0 17px;
}
.messages {
    margin-right: 6px;
}
.taskbar {
    display: flex;
    align-items: center;
    gap: 1px;
    height: 28px;
    border-top: 1px solid #b4bcc0;
    border-bottom: 2px solid #2c3e50;
    background: linear-gradient(90deg, #cfe7ec, #cde8ee 50%, #d3dcec 70%, #d6e3ef);
}
.taskbar button {
    display: flex;
    align-items: center;
    justify-content: center;
    width: 34px;
    height: 25px;
}
.taskbar .run {
    border-bottom: 2px solid #1669b5;
}
.taskbar .active {
    background: #eef8fa;
}
.tray {
    display: flex;
    align-items: center;
    gap: 7px;
    height: 100%;
    margin-left: auto;
}
.tray .lang {
    margin: 0 5px 0 2px;
}
.tray time {
    margin-right: 8px;
}
.peek {
    width: 4px;
    height: 100%;
    margin-left: 12px;
    border-left: 1px solid #aab4bc;
}

/* save dialog */
.dialog {
    position: absolute;
    left: 363px;
    top: 31px;
    width: 555px;
    border: 1px solid #777;
    background: #efefef;
    box-shadow: 0 3px 14px rgba(0, 0, 0, 0.45);
    font-family: "DejaVu Sans Condensed", sans-serif;
    font-size: 10px;
}
.dialog-head {
    display: flex;
    align-items: center;
    gap: 4px;
    height: 28px;
    padding: 0 8px 0 6px;
    background: #fff;
    font-family: Roboto, sans-serif;
}
.dialog-head h1 {
    flex: 1;
}
.form {
    display: flex;
    flex-direction: column;
    gap: 6px;
    padding: 20px 10px 10px;
}
.row {
    display: flex;
    gap: 4px;
    align-items: center;
    padding: 0 9px 0 8px;
}
.row label {
    width: 54px;
}
.row select, .row .field, .file {
    flex: 1;
}
.row .field:disabled {
    background: #ededed;
}
.file {
    display: flex;
    align-items: center;
    padding-right: 7px;
    border-color: #5fb2d8;
}
.file input {
    flex: 1;
    height: 18px;
    padding: 0 1px;
    border: 0;
    background: none;
    font-family: "Open Sans", sans-serif;
}
.clear {
    width: 12px;
    height: 10px;
}
.browse, .pick {
    display: flex;
    align-items: center;
    justify-content: center;
    width: 22px;
}
.options {
    display: flex;
    flex-direction: column;
    height: 423px;
    margin-top: 9px;
    padding: 8px 9px 0 7px;
    border: 1px solid #c4c4c4;
}
.opt-row {
    display: flex;
    align-items: center;
    height: 22px;
}
.encoding, .geomtype {
    width: 280px;
    margin-left: auto;
}
.options > .check {
    height: 26px;
}
.options .muted {
    color: #888;
}
.options h3 {
    display: flex;
    align-items: center;
    gap: 7px;
    height: 20px;
    padding-left: 3px;
    font-family: Inter, sans-serif;
    font-weight: bold;
    white-space: nowrap;
}
.options h3::before {
    content: "";
    width: 10px;
    height: 10px;
    background: #333;
}
.options .closed::before {
    clip-path: polygon(20% 0, 90% 50%, 20% 100%);
}
.options .open::before {
    clip-path: polygon(0 20%, 100% 20%, 50% 90%);
}
.group {
    margin-left: 3px;
    border: 1px solid #dcdcdc;
    background: #ececec;
}
.geometry {
    padding: 8px 10px 8px 8px;
}
.group .check {
    height: 24px;
}
.options .extent {
    height: 26px;
}
.layer-options {
    display: flex;
    flex-direction: column;
    gap: 4px;
    padding: 8px 10px 8px 8px;
}
.layer-options label {
    width: 39px;
}
.layer-options select {
    flex: 1;
}
.actions {
    display: flex;
    align-items: center;
    justify-content: flex-end;
    gap: 5px;
}
.actions .check {
    margin-right: 6px;
}
.actions .btn {
    width: 75px;
}
.actions .primary {
    border-color: #5fb2d8;
}

/* crs tooltip under the pointer */
.halo {
    position: absolute;
    left: 577px;
    top: 156px;
    width: 38px;
    height: 38px;
    border-radius: 50%;
    background: rgba(240, 235, 50, 0.75);
}
.tooltip {
    position: absolute;
    left: 597px;
    top: 190px;
    padding: 2px 3px;
    border: 1px solid #222;
    background: #ffffe1;
    box-shadow: 2px 2px 3px rgba(0, 0, 0, 0.5);
    font-family: Roboto, sans-serif;
    line-height: 14px;
    white-space: pre;
}
.pointer {
    position: absolute;
    left: 595px;
    top: 173px;
    width: 12px;
    height: 18px;
}
```
